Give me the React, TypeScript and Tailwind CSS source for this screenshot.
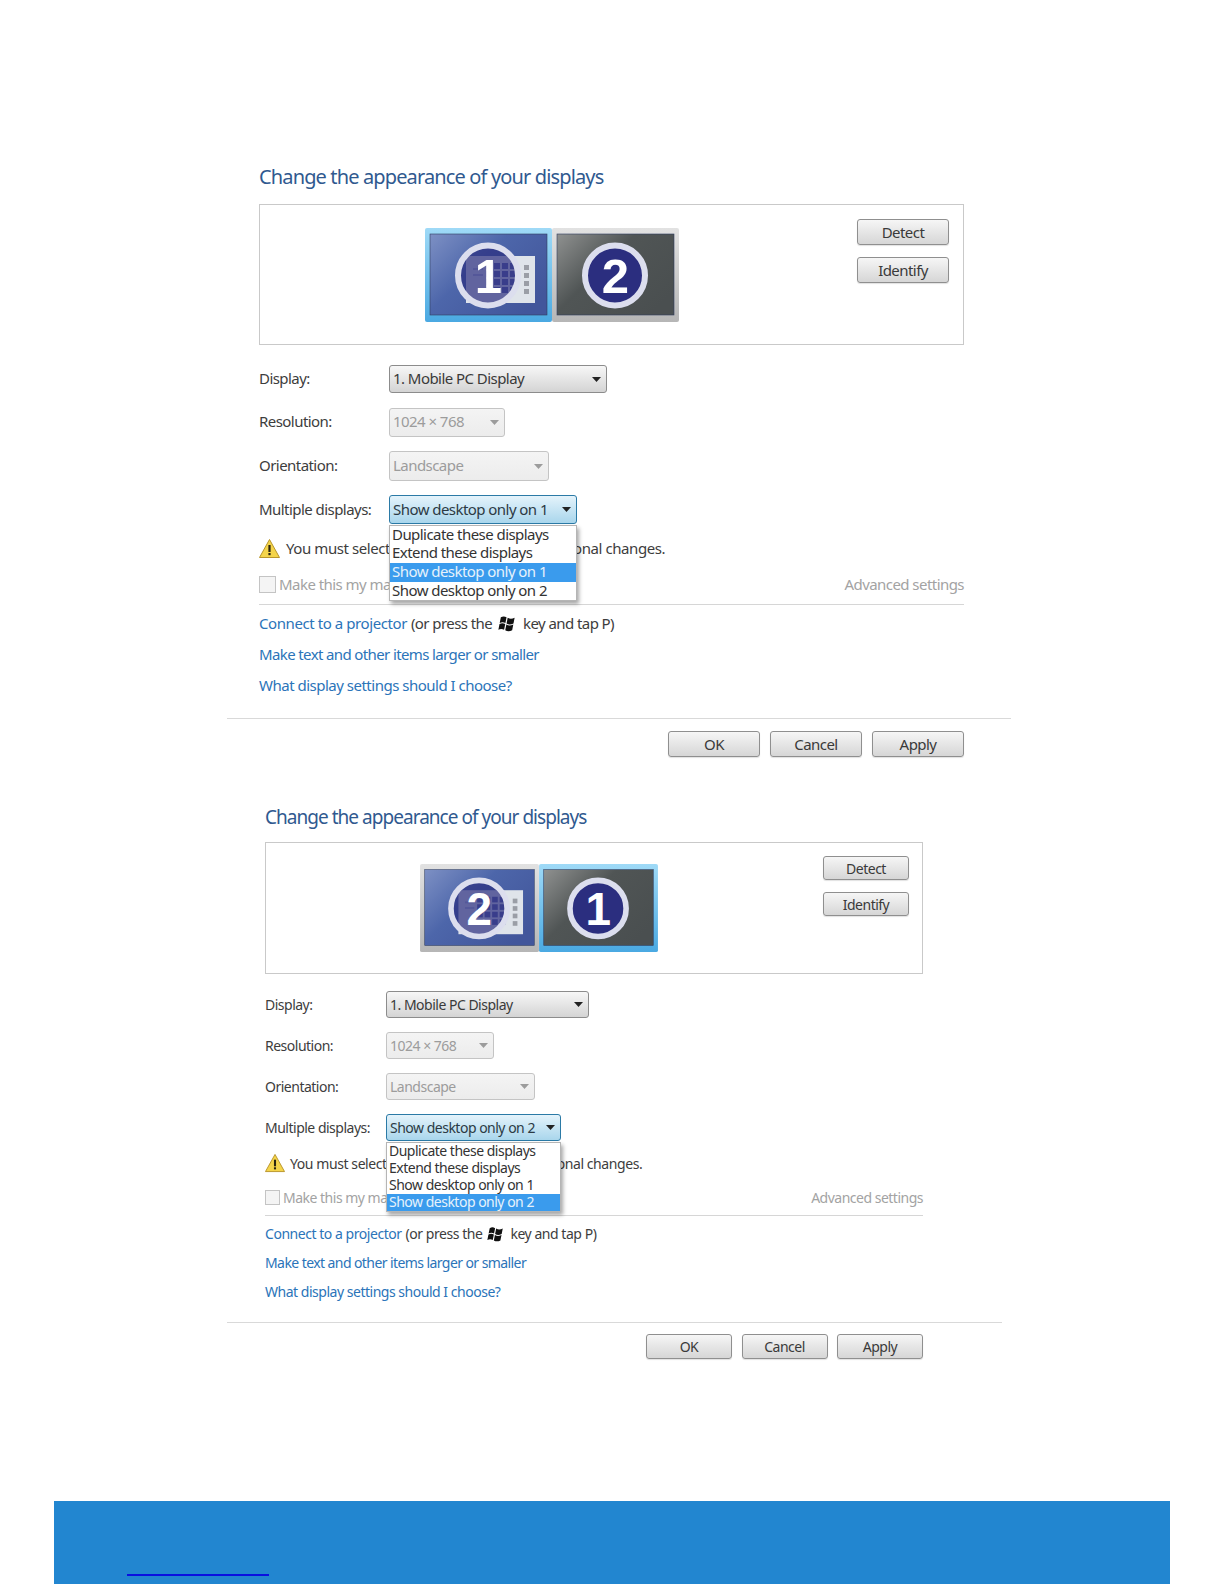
// App.tsx - display settings screenshots (Win7 style), two stacked panels
import React from "react";

interface PanelSizes {
  wrap: string;
  inner: string;
  text: string;
  title: string;
  titleRow: string;
  box: string;
  monitorWrap: string;
  monitorW: number;
  monitorH: number;
  btnCol: string;
  btn: string;
  rows: [string, string, string, string];
  selects: [string, string, string, string];
  labelW: string;
  nudge: string;
  warnRow: string;
  warnIcon: number;
  warnGap: string;
  warnText: string;
  checkRow: string;
  check: string;
  checkText: string;
  rule: string;
  linkRow: string;
  linkNudge: string;
  connect: string;
  tail: string;
  makeText: string;
  whatText: string;
  linkGap: string;
  winIcon: number;
  footRule: string;
  footBtns: string;
  footBtn: string;
  listItem: string;
  listTop: string;
  swapped: boolean;
}

const big: PanelSizes = {
  wrap: "ml-[227px] w-[784px] mt-[163px]",
  inner: "pl-[32px] pr-[47px]",
  text: "text-[15px] tracking-[-0.55px]",
  title: "text-[20px] tracking-[-0.86px]",
  titleRow: "h-[28px] mb-[13px]",
  box: "h-[141px]",
  monitorWrap: "ml-[165px] mt-[23px]",
  monitorW: 127,
  monitorH: 94,
  btnCol: "mr-[14px] mt-[14px] gap-[12px]",
  btn: "w-[92px] h-[26px]",
  rows: ["mt-[20px] h-[28px]", "mt-[15px] h-[29px]", "mt-[14px] h-[30px]", "mt-[14px] h-[29px]"],
  selects: ["w-[218px]", "w-[116px]", "w-[160px]", "w-[188px]"],
  labelW: "w-[130px]",
  nudge: "pb-[2px]",
  warnRow: "mt-[12px] h-[24px]",
  warnIcon: 21,
  warnGap: "ml-[6px] tracking-[-0.42px]",
  warnText: "You must select Apply before making additional changes.",
  checkRow: "mt-[12px] h-[24px]",
  check: "w-[17px] h-[17px]",
  checkText: "ml-[3px]",
  rule: "mt-[8px]",
  linkRow: "mt-[7px] h-[24px]",
  linkNudge: "pb-[2px]",
  connect: "tracking-[-0.42px]",
  tail: "tracking-[-0.58px]",
  makeText: "tracking-[-0.62px]",
  whatText: "tracking-[-0.5px]",
  linkGap: "mx-[6px]",
  winIcon: 19,
  footRule: "mt-[20px]",
  footBtns: "mt-[12px] pr-[47px] gap-[10px]",
  footBtn: "w-[92px] h-[26px]",
  listItem: "h-[18.7px] leading-[17px] pl-[2px]",
  listTop: "top-[29.5px]",
  swapped: false,
};

const small: PanelSizes = {
  wrap: "ml-[227px] w-[775px] mt-[47px]",
  inner: "pl-[38px] pr-[79px]",
  text: "text-[14px] tracking-[-0.5px]",
  title: "text-[19px] tracking-[-0.97px]",
  titleRow: "h-[26px] mb-[12px]",
  box: "h-[132px]",
  monitorWrap: "ml-[154px] mt-[21px]",
  monitorW: 119,
  monitorH: 88,
  btnCol: "mr-[13px] mt-[13px] gap-[12px]",
  btn: "w-[86px] h-[24px]",
  rows: ["mt-[17px] h-[27px]", "mt-[14px] h-[27px]", "mt-[14px] h-[27px]", "mt-[14px] h-[27px]"],
  selects: ["w-[203px]", "w-[108px]", "w-[149px]", "w-[175px]"],
  labelW: "w-[121px]",
  nudge: "",
  warnRow: "mt-[11px] h-[22px]",
  warnIcon: 20,
  warnGap: "ml-[5px] tracking-[-0.42px]",
  warnText: "You must select Apply before making additional changes.",
  checkRow: "mt-[12px] h-[22px]",
  check: "w-[15px] h-[15px]",
  checkText: "ml-[3px]",
  rule: "mt-[7px]",
  linkRow: "mt-[7px] h-[22px]",
  linkNudge: "pb-[1px]",
  connect: "tracking-[-0.46px]",
  tail: "tracking-[-0.46px]",
  makeText: "tracking-[-0.58px]",
  whatText: "tracking-[-0.48px]",
  linkGap: "mx-[5px]",
  winIcon: 18,
  footRule: "mt-[19px]",
  footBtns: "mt-[11px] pr-[79px] gap-[9.5px]",
  footBtn: "w-[86px] h-[25px]",
  listItem: "h-[17px] leading-[16px] pl-[2px]",
  listTop: "top-[28px]",
  swapped: true,
};

const Arrow = ({ color = "#222" }: { color?: string }) => (
  <svg width="9" height="5" viewBox="0 0 9 5" className="shrink-0">
    <path d="M0 0h9L4.5 5z" fill={color} />
  </svg>
);

// monitor tile, number in a ring, optional desktop thumbnail underneath
const Monitor = ({
  id,
  num,
  selected,
  desktop,
  w,
  h,
}: {
  id: string;
  num: string;
  selected: boolean;
  desktop: boolean;
  w: number;
  h: number;
}) => {
  const cells = [0, 1, 2, 3];
  return (
    <svg width={w} height={h} viewBox="0 0 127 94" className="shrink-0 block">
      <defs>
        <linearGradient id={id + "f"} x1="0" y1="0" x2="0" y2="1">
          <stop offset="0" stopColor={selected ? "#9fdaf7" : "#e2e2e2"} />
          <stop offset="1" stopColor={selected ? "#4aa9e2" : "#b6b6b6"} />
        </linearGradient>
        <linearGradient id={id + "b"} x1="0" y1="0" x2="1" y2="0.7">
          <stop offset="0" stopColor={desktop ? "#7d90c4" : "#8f9190"} />
          <stop offset="0.45" stopColor={desktop ? "#4d66aa" : "#505555"} />
          <stop offset="1" stopColor={desktop ? "#42569b" : "#4a4f50"} />
        </linearGradient>
      </defs>
      <rect width="127" height="94" rx="2" fill={`url(#${id}f)`} />
      <rect x="5" y="6" width="117" height="81" fill={`url(#${id}b)`} stroke="#2f3d60" strokeWidth="0.6" />
      {desktop && (
        <g>
          <rect x="41" y="28" width="69" height="47" fill="#dfe4ea" />
          {cells.map((r) =>
            cells.map((c) => (
              <rect key={`${r}-${c}`} x={61 + c * 8} y={35 + r * 8} width="6" height="6" fill="#5a62a8" />
            ))
          )}
          {cells.map((r) => (
            <rect key={r} x="99" y={37 + r * 8} width="5" height="5" fill="#9a9ea6" />
          ))}
          <rect x="48" y="40" width="10" height="2" fill="#b4b8d8" />
          <rect x="48" y="46" width="10" height="2" fill="#b4b8d8" />
        </g>
      )}
      <circle cx="63" cy="47.500" r="30" fill="#2b2e7f" fillOpacity={desktop ? 0.7 : 1} stroke="#dcdeee" strokeWidth="6" />
      <text
        x="63"
        y="65"
        textAnchor="middle"
        fill="#fff"
        fontSize="49"
        fontWeight="700"
        fontFamily="'Liberation Sans', sans-serif"
      >
        {num}
      </text>
    </svg>
  );
};

const WinLogo = ({ size }: { size: number }) => (
  <svg width={size} height={size} viewBox="0 0 20 20" className="shrink-0">
    <path d="M3 3.500c2-1.200 4-1.200 6 0l-1.200 6c-2-1.200-4-1.200-6 0z" fill="#111" />
    <path d="M10.200 4c2.200 1.400 4.400 1.400 7.300 0l-1.200 6c-2.700 1.400-5 1.400-7.300 0z" fill="#111" />
    <path d="M1.600 10.600c2-1.200 4-1.200 6 0l-1.200 6c-2-1.200-4-1.200-6 0z" fill="#111" />
    <path d="M8.800 11.100c2.200 1.400 4.500 1.400 7.300 0l-1.200 6c-2.700 1.400-5 1.400-7.300 0z" fill="#111" />
  </svg>
);

const WarnIcon = ({ size }: { size: number }) => (
  <svg width={size} height={size} viewBox="0 0 21 21" className="shrink-0">
    <path d="M10.500 1.500L20.500 19.500H0.500z" fill="#f4d44a" stroke="#b8952a" strokeWidth="1" strokeLinejoin="round" />
    <rect x="9.400" y="7" width="2.200" height="7" fill="#2a2410" />
    <rect x="9.400" y="15" width="2.200" height="2.200" fill="#2a2410" />
  </svg>
);

const Button = ({ label, size }: { label: string; size: string }) => (
  <div
    className={`${size} flex items-center justify-center rounded-[3px] border border-[#8f8f8f] bg-linear-to-b from-[#f6f6f6] to-[#d6d6d6] text-[#3a3a3a] shadow-[0_1px_1px_rgba(0,0,0,0.12)]`}
  >
    {label}
  </div>
);

const Select = ({
  label,
  width,
  state,
  nudge,
}: {
  label: string;
  width: string;
  state: "normal" | "disabled" | "focus";
  nudge: string;
}) => {
  let look = "border-[#8c8c8c] from-[#f7f7f7] to-[#d4d4d4] text-[#3a3a3a]";
  if (state === "disabled") look = "border-[#c4c4c4] from-[#f4f4f4] to-[#ececec] text-[#9c9c9c]";
  if (state === "focus") look = "border-[#2b7aa6] from-[#e4f3fb] to-[#a9d6ec] text-[#2c3a44]";
  return (
    <div className={`${width} h-full flex items-center justify-between pl-[3px] pr-[5px] rounded-[3px] border bg-linear-to-b ${look}`}>
      <span className={`${nudge} whitespace-nowrap`}>{label}</span>
      <Arrow color={state === "disabled" ? "#9c9c9c" : "#222"} />
    </div>
  );
};

const OPTIONS = ["Duplicate these displays", "Extend these displays", "Show desktop only on 1", "Show desktop only on 2"];

const Panel = ({ s, id, picked }: { s: PanelSizes; id: string; picked: number }) => (
  <div className={`${s.wrap} ${s.text} text-[#3d3d3d] shrink-0`}>
    <div className={s.inner}>
      <div className={`${s.titleRow} ${s.title} flex items-center text-[#30598f]`}>
        Change the appearance of your displays
      </div>

      <div className={`${s.box} flex items-start justify-between border border-[#c9c9c9]`}>
        <div className={`${s.monitorWrap} flex`}>
          {s.swapped ? (
            <>
              <Monitor id={id + "a"} num="2" selected={false} desktop w={s.monitorW} h={s.monitorH} />
              <Monitor id={id + "b"} num="1" selected desktop={false} w={s.monitorW} h={s.monitorH} />
            </>
          ) : (
            <>
              <Monitor id={id + "a"} num="1" selected desktop w={s.monitorW} h={s.monitorH} />
              <Monitor id={id + "b"} num="2" selected={false} desktop={false} w={s.monitorW} h={s.monitorH} />
            </>
          )}
        </div>
        <div className={`${s.btnCol} flex flex-col`}>
          <Button label="Detect" size={s.btn} />
          <Button label="Identify" size={s.btn} />
        </div>
      </div>

      <div className={`${s.rows[0]} flex items-center`}>
        <div className={`${s.labelW} ${s.nudge}`}>Display:</div>
        <Select label="1. Mobile PC Display" width={s.selects[0]} state="normal" nudge={s.nudge} />
      </div>
      <div className={`${s.rows[1]} flex items-center`}>
        <div className={`${s.labelW} ${s.nudge}`}>Resolution:</div>
        <Select label="1024 × 768" width={s.selects[1]} state="disabled" nudge={s.nudge} />
      </div>
      <div className={`${s.rows[2]} flex items-center`}>
        <div className={`${s.labelW} ${s.nudge}`}>Orientation:</div>
        <Select label="Landscape" width={s.selects[2]} state="disabled" nudge={s.nudge} />
      </div>
      <div className={`${s.rows[3]} relative z-10 flex items-center`}>
        <div className={s.labelW}>Multiple displays:</div>
        <div className="relative h-full">
          <Select label={OPTIONS[picked]} width={s.selects[3]} state="focus" nudge="" />
          <div className={`absolute left-0 ${s.listTop} ${s.selects[3]} border border-[#b5b5b5] bg-white text-[#333] shadow-[2px_3px_4px_rgba(0,0,0,0.35)]`}>
            {OPTIONS.map((opt, i) => (
              <div
                key={opt}
                className={`${s.listItem} whitespace-nowrap ${i === picked ? "bg-[#3a9bed] text-[#e6f2fb]" : ""}`}
              >
                {opt}
              </div>
            ))}
          </div>
        </div>
      </div>

      <div className={`${s.warnRow} flex items-center`}>
        <WarnIcon size={s.warnIcon} />
        <span className={`${s.warnGap} whitespace-nowrap`}>{s.warnText}</span>
      </div>

      <div className={`${s.checkRow} flex items-center justify-between text-[#a3a3a3]`}>
        <div className="flex items-center">
          <div className={`${s.check} border border-[#c4c4c4] bg-[#f4f4f4]`} />
          <span className={s.checkText}>Make this my main display</span>
        </div>
        <span>Advanced settings</span>
      </div>

      <div className={`${s.rule} h-px bg-[#d6d6d6]`} />

      <div className={`${s.linkRow} ${s.linkNudge} flex items-center`}>
        <span className={`${s.connect} text-[#2b74b9]`}>Connect to a projector</span>
        <span className={`${s.tail} ml-[4px]`}>(or press the</span>
        <span className={s.linkGap}>
          <WinLogo size={s.winIcon} />
        </span>
        <span className={s.tail}>key and tap P)</span>
      </div>
      <div className={`${s.linkRow} ${s.linkNudge} ${s.makeText} flex items-center text-[#2b74b9]`}>
        Make text and other items larger or smaller
      </div>
      <div className={`${s.linkRow} ${s.linkNudge} ${s.whatText} flex items-center text-[#2b74b9]`}>
        What display settings should I choose?
      </div>
    </div>

    <div className={`${s.footRule} h-px bg-[#d9d9d9]`} />

    <div className={`${s.footBtns} flex justify-end`}>
      <Button label="OK" size={s.footBtn} />
      <Button label="Cancel" size={s.footBtn} />
      <Button label="Apply" size={s.footBtn} />
    </div>
  </div>
);

export default function App() {
  return (
    <div className="w-[1224px] h-[1584px] flex flex-col overflow-hidden bg-white font-['Noto_Sans',sans-serif]">
      <Panel s={big} id="top" picked={2} />
      <Panel s={small} id="bot" picked={3} />
      <div className="mt-auto mx-[54px] h-[83px] bg-[#2286d0] pl-[73px] pt-[73px]">
        <div className="w-[142px] h-[2px] bg-[#0a10e0]" />
      </div>
    </div>
  );
}
